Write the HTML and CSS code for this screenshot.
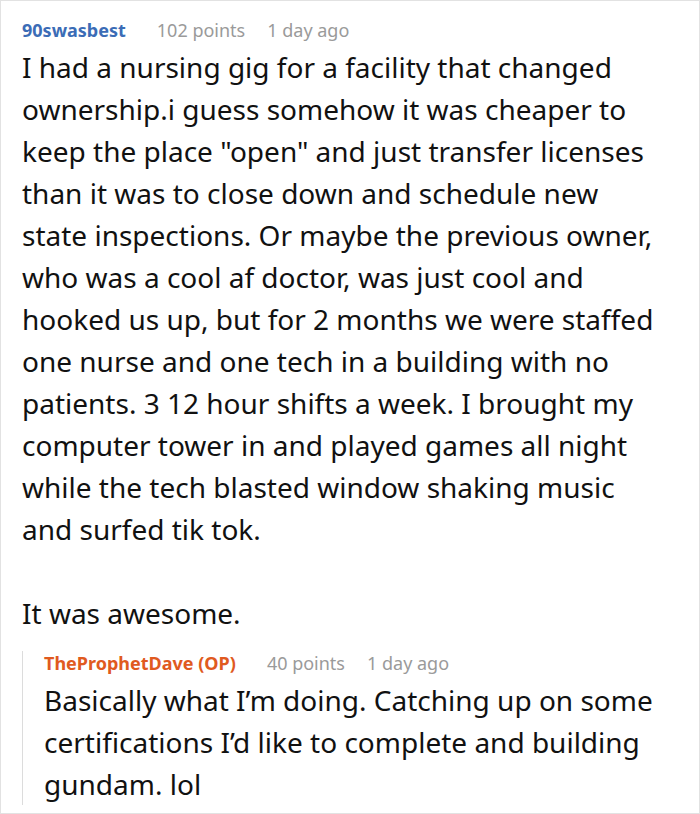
FILE: index.html
```html
<!DOCTYPE html>
<html>
<head>
<meta charset="utf-8">
<link rel="stylesheet" href="styles.css">
</head>
<body>
<div class="card">
  <div class="comment">
    <div class="meta">
      <span class="user">90swasbest</span>
      <span class="info">102 points</span>
      <span class="info">1 day ago</span>
    </div>
    <div class="text">
      <p>I had a nursing gig for a facility that changed ownership.i guess somehow it was cheaper to keep the place "open" and just transfer licenses than it was to close down and schedule new state inspections. Or maybe the previous owner, who was a cool af doctor, was just cool and hooked us up, but for 2 months we were staffed one nurse and one tech in a building with no patients. 3 12 hour shifts a week. I brought my computer tower in and played games all night while the tech blasted window shaking music and surfed tik tok.</p>
      <p>It was awesome.</p>
    </div>
    <div class="reply">
      <div class="meta">
        <span class="user op">TheProphetDave (OP)</span>
        <span class="info">40 points</span>
        <span class="info">1 day ago</span>
      </div>
      <div class="text">
        <p>Basically what I’m doing. Catching up on some certifications I’d like to complete and building gundam. lol</p>
      </div>
    </div>
  </div>
</div>
</body>
</html>
```
FILE: styles.css
```css
html, body {
  margin: 0;
  padding: 0;
  background: #fff;
}
.card {
  width: 700px;
  height: 814px;
  box-sizing: border-box;
  border: 1px solid #e2e2e2;
  overflow: hidden;
  font-family: "Noto Sans", "Open Sans", sans-serif;
  color: #111;
}
.comment {
  padding: 17px 39px 0 21px;
}
.meta {
  display: flex;
  font-size: 18px;
  line-height: 24px;
}
.user {
  font-weight: 700;
  color: #3b6cb6;
  margin-right: 31px;
}
.info {
  color: #9a9a9a;
  margin-right: 22px;
}
.user.op {
  color: #e05a1f;
}
.text {
  font-size: 28px;
  line-height: 42px;
  margin-top: 4px;
}
.text p {
  margin: 0 0 42px;
}
.text p:last-child {
  margin-bottom: 0;
}
.reply {
  margin-top: 28px;
  border-left: 1px solid #dcdcdc;
  padding-left: 21px;
}
.reply .meta {
  margin-top: -11px;
}
.reply .text {
  margin-top: 4px;
  margin-bottom: -10px;
}
```
